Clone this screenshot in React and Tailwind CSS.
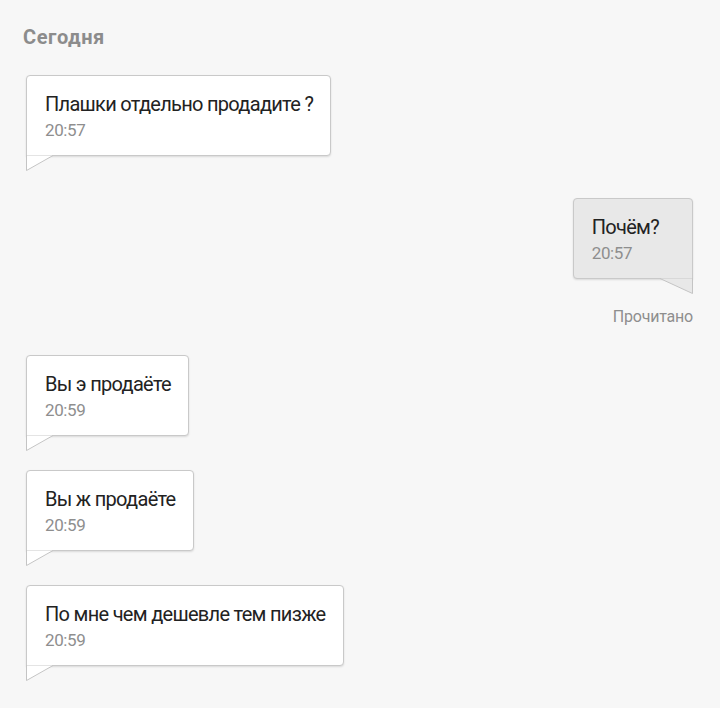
import React from 'react';

const messages = [
  { id: 1, text: 'Плашки отдельно продадите ?', time: '20:57', mine: false },
  { id: 2, text: 'Почём?', time: '20:57', mine: true, status: 'Прочитано' },
  { id: 3, text: 'Вы э продаёте', time: '20:59', mine: false },
  { id: 4, text: 'Вы ж продаёте', time: '20:59', mine: false },
  { id: 5, text: 'По мне чем дешевле тем пизже', time: '20:59', mine: false },
];

// little corner tail under the bubble
const Tail = ({ mine }) =>
  mine ? (
    <svg width="33" height="16" viewBox="0 0 33 16" className="-mt-px self-end">
      <polygon points="0,0.5 32.5,0.5 32.5,15.5" fill="#e8e8e8" />
      <polyline points="0,0.5 32.5,15.5 32.5,0" fill="none" stroke="#c4c4c4" strokeWidth="1" />
    </svg>
  ) : (
    <svg width="28" height="16" viewBox="0 0 28 16" className="-mt-px self-start">
      <polygon points="0.5,0.5 27,0.5 0.5,15.5" fill="#ffffff" />
      <polyline points="27,0.5 0.5,15.5 0.5,0" fill="none" stroke="#c4c4c4" strokeWidth="1" />
    </svg>
  );

const Bubble = ({ msg }) => (
  <div className={msg.mine ? 'flex flex-col items-end' : 'flex flex-col items-start'}>
    <div
      className={
        'border border-[#c9c9c9] pt-[15px] pb-[12px] pl-[18px] shadow-[0_1px_2px_rgba(0,0,0,0.12)] ' +
        (msg.mine
          ? 'bg-[#e8e8e8] rounded-t-[4px] rounded-bl-[4px] pr-[33px]'
          : 'bg-white rounded-t-[4px] rounded-br-[4px] pr-[17px]')
      }
    >
      <div className="text-[20px] leading-[26px] text-[#222222] tracking-[-0.7px]">{msg.text}</div>
      <div className="text-[17px] leading-[26px] text-[#8e8e8e] tracking-[-0.4px]">{msg.time}</div>
    </div>
    <Tail mine={msg.mine} />
    {msg.status && (
      <div className="mt-[13px] text-[16px] leading-[20px] text-[#8e8e8e] tracking-[-0.2px]">{msg.status}</div>
    )}
  </div>
);

export default function App() {
  return (
    <div
      className="min-h-[708px] w-[720px] bg-[#f7f7f7] pl-[26px] pr-[27px] pt-[24px]"
      style={{ fontFamily: 'Roboto, "Noto Sans", sans-serif' }}
    >
      <div className="-ml-[3px] text-[20px] leading-[26px] font-bold text-[#8c8c8c] tracking-[0.6px]">Сегодня</div>
      <div className="mt-[25px] flex flex-col">
        <Bubble msg={messages[0]} />
        <div className="mt-[27px]">
          <Bubble msg={messages[1]} />
        </div>
        <div className="mt-[28px] flex flex-col gap-[19px]">
          <Bubble msg={messages[2]} />
          <Bubble msg={messages[3]} />
          <Bubble msg={messages[4]} />
        </div>
      </div>
    </div>
  );
}
